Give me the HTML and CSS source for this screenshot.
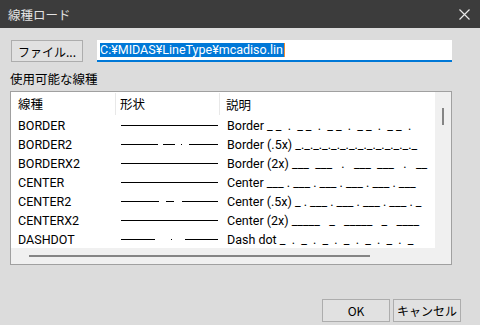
FILE: index.html
```html
<!DOCTYPE html>
<html lang="ja">
<head>
<meta charset="utf-8">
<title>線種ロード</title>
<link rel="stylesheet" href="styles.css">
</head>
<body>
<div class="dialog">
  <div class="titlebar">
    <span class="title">線種ロード</span>
    <svg class="close" width="11" height="11" viewBox="0 0 11 11"><path d="M0.5 0.5L10.5 10.5M10.5 0.5L0.5 10.5" stroke="#e8e8e8" stroke-width="1.2"/></svg>
  </div>
  <div class="body">
    <div class="filerow">
      <button class="btn filebtn">ファイル...</button>
      <div class="path"><span class="sel">C:¥MIDAS¥LineType¥mcadiso.lin</span></div>
    </div>
    <div class="label">使用可能な線種</div>
    <div class="listbox">
      <div class="listarea">
        <div class="row head">
          <div class="c1">線種</div>
          <div class="c2">形状</div>
          <div class="c3">説明</div>
        </div>
        <div class="row">
          <div class="c1">BORDER</div>
          <div class="c2"><svg class="ls" width="97" height="3"><path d="M0 1.5H97" stroke="#000"/></svg></div>
          <div class="c3">Border _ _  .  _ _  .  _ _  .  _ _  .  _ _  .</div>
        </div>
        <div class="row">
          <div class="c1">BORDER2</div>
          <div class="c2"><svg class="ls" width="97" height="3"><path d="M0 1.5H37M42 1.5H54M60 1.5H61M68 1.5H97" stroke="#000"/></svg></div>
          <div class="c3">Border (.5x) _._._._._._._._._._._._._._</div>
        </div>
        <div class="row">
          <div class="c1">BORDERX2</div>
          <div class="c2"><svg class="ls" width="97" height="3"><path d="M0 1.5H97" stroke="#000"/></svg></div>
          <div class="c3">Border (2x) ___  ___   .   ___  ___   .   __</div>
        </div>
        <div class="row">
          <div class="c1">CENTER</div>
          <div class="c2"><svg class="ls" width="97" height="3"><path d="M0 1.5H97" stroke="#000"/></svg></div>
          <div class="c3">Center ___ . ___ . ___ . ___ . ___ . ___</div>
        </div>
        <div class="row">
          <div class="c1">CENTER2</div>
          <div class="c2"><svg class="ls" width="97" height="3"><path d="M0 1.5H38M45 1.5H53M61 1.5H97" stroke="#000"/></svg></div>
          <div class="c3">Center (.5x) _ . ___ . ___ . ___ . ___ . _</div>
        </div>
        <div class="row">
          <div class="c1">CENTERX2</div>
          <div class="c2"><svg class="ls" width="97" height="3"><path d="M0 1.5H97" stroke="#000"/></svg></div>
          <div class="c3">Center (2x) _____   _   _____   _   ____</div>
        </div>
        <div class="row">
          <div class="c1">DASHDOT</div>
          <div class="c2"><svg class="ls" width="97" height="3"><path d="M0 1.5H34M50 1.5H51M64 1.5H97" stroke="#000"/></svg></div>
          <div class="c3">Dash dot _  .  _  .  _  .  _  .  _  .  _  .  _</div>
        </div>
      </div>
      <div class="vscroll"><div class="vthumb"></div></div>
      <div class="hscroll"><div class="hthumb"></div></div>
      <div class="corner"></div>
    </div>
    <div class="footer">
      <button class="btn okbtn">OK</button>
      <button class="btn cancelbtn">キャンセル</button>
    </div>
  </div>
</div>
</body>
</html>
```
FILE: styles.css
```css
html, body {
  margin: 0;
  padding: 0;
}
body {
  width: 480px;
  height: 325px;
  overflow: hidden;
  background: #dcdcdc;
  font-family: Roboto, "Noto Sans CJK JP", sans-serif;
  font-size: 12.5px;
  color: #000;
}
.dialog {
  display: flex;
  flex-direction: column;
  height: 325px;
}
.titlebar {
  height: 28px;
  background: #3c3c3c;
  display: flex;
  align-items: center;
  justify-content: space-between;
  padding: 0 10px 0 8px;
  box-sizing: border-box;
}
.title {
  color: #e2e2e2;
  font-size: 12.5px;
  font-family: "Noto Sans CJK JP", sans-serif;
  margin-top: 1px;
}
.close {
  display: block;
}
.body {
  flex: 1;
  display: flex;
  flex-direction: column;
  padding: 12px 0 0 10px;
}
.filerow {
  display: flex;
  align-items: stretch;
  height: 22px;
}
.btn {
  background: #e1e1e1;
  border: 1px solid #adadad;
  font-family: "Noto Sans CJK JP", sans-serif;
  font-size: 12px;
  color: #000;
  padding: 0;
  margin: 0;
  box-sizing: border-box;
}
.filebtn {
  width: 72px;
  margin-left: 1px;
}
.path {
  width: 355px;
  margin-left: 14px;
  background: #fff;
  border-bottom: 2px solid #0078d7;
  box-sizing: border-box;
  padding: 3px 0 0 3px;
  line-height: 14px;
}
.sel {
  background: #0078d7;
  color: #fff;
  font-family: Roboto, sans-serif;
  font-size: 12.5px;
  display: inline-block;
  height: 14px;
  padding-right: 1px;
  border-right: 1px solid #f08a30;
}
.label {
  margin-top: 10px;
  height: 14px;
  line-height: 14px;
  font-family: "Noto Sans CJK JP", sans-serif;
  font-size: 12.5px;
}
.listbox {
  margin-top: 5px;
  width: 442px;
  height: 174px;
  box-sizing: border-box;
  border: 1px solid #a0a0a0;
  display: grid;
  grid-template-columns: 424px 16px;
  grid-template-rows: 156px 16px;
  background: #fff;
}
.listarea {
  overflow: hidden;
  background: #fff;
}
.row {
  display: grid;
  grid-template-columns: 105px 104px 1fr;
  height: 19px;
  align-items: center;
}
.row.head {
  height: 24px;
  font-family: "Noto Sans CJK JP", sans-serif;
  font-size: 12.5px;
}
.head .c1, .head .c2 {
  border-right: 1px solid #e8e8e8;
  height: 22px;
  line-height: 22px;
  box-sizing: border-box;
}
.head .c2 {
  padding-left: 4px;
}
.head .c3 {
  padding-left: 6px;
}
.c1 {
  padding-left: 7px;
}
.c2 {
  padding-left: 5px;
  display: flex;
  align-items: center;
}
.c3 {
  padding-left: 7px;
  white-space: pre;
  overflow: hidden;
}
.ls {
  display: block;
}
.vscroll {
  background: #f0f0f0;
  position: relative;
}
.vthumb {
  position: absolute;
  left: 7px;
  top: 16px;
  width: 2px;
  height: 17px;
  background: #858585;
}
.hscroll {
  background: #f0f0f0;
  position: relative;
}
.hthumb {
  position: absolute;
  left: 18px;
  top: 7px;
  width: 341px;
  height: 2px;
  background: #858585;
}
.corner {
  background: #f0f0f0;
}
.footer {
  display: flex;
  justify-content: flex-end;
  gap: 3px;
  margin-top: 34px;
  padding-right: 19px;
}
.okbtn, .cancelbtn {
  width: 68px;
  height: 23px;
}
```
